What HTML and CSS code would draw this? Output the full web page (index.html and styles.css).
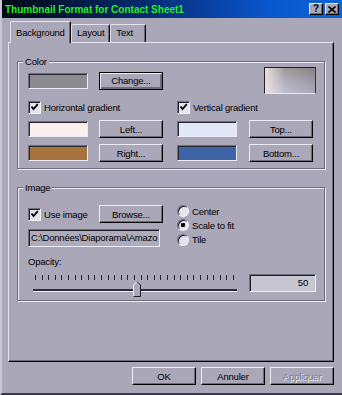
FILE: index.html
```html
<!doctype html>
<html lang="fr">
	<head>
		<meta charset="utf-8">
		<title>Thumbnail Format for Contact Sheet1</title>
		<link rel="stylesheet" href="styles.css">
	</head>
	<body>
		<div class="window">
			<div class="titlebar">
				<span class="title">Thumbnail Format for Contact Sheet1</span>
				<div class="title-btns">
					<span class="tbtn">?</span>
					<span class="tbtn">
						<svg width="8" height="7" viewBox="0 0 8 7"><path d="M0.5 0.5 L7.5 6.5 M7.5 0.5 L0.5 6.5" stroke="#000" stroke-width="1.6"/></svg>
					</span>
				</div>
			</div>

			<div class="tabs">
				<div class="tab active">Background</div>
				<div class="tab">Layout</div>
				<div class="tab">Text</div>
			</div>

			<div class="panel">
				<fieldset class="group color-group">
					<legend>Color</legend>
					<div class="grid color-grid">
						<div class="swatch sw-gray"></div>
						<button class="btn default">Change...</button>
						<div class="preview"></div>

						<label class="check span-2"><span class="box checked"></span>Horizontal gradient</label>
						<label class="check span-2"><span class="box checked"></span>Vertical gradient</label>

						<div class="swatch sw-pink"></div>
						<button class="btn">Left...</button>
						<div class="swatch sw-lightblue"></div>
						<button class="btn">Top...</button>

						<div class="swatch sw-brown"></div>
						<button class="btn">Right...</button>
						<div class="swatch sw-blue"></div>
						<button class="btn">Bottom...</button>
					</div>
				</fieldset>

				<fieldset class="group image-group">
					<legend>Image</legend>
					<div class="grid image-grid">
						<label class="check"><span class="box checked"></span>Use image</label>
						<button class="btn">Browse...</button>
						<div class="radios">
							<label class="radio"><span class="dot"></span>Center</label>
							<label class="radio"><span class="dot selected"></span>Scale to fit</label>
							<label class="radio"><span class="dot"></span>Tile</label>
						</div>

						<div class="path span-2">C:\Données\Diaporama\Amazo</div>

						<div class="caption span-3">Opacity:</div>

						<div class="slider">
							<div class="ticks"></div>
							<div class="track"></div>
							<svg class="thumb" width="8" height="16" viewBox="0 0 8 16">
								<path d="M0.5 15.5 V4 L4 0.5 L7.5 4 V15.5 Z" fill="#a9a7b8"/>
								<path d="M0.5 15.5 V4 L4 0.5" fill="none" stroke="#f0f0f8"/>
								<path d="M4 0.5 L7.5 4 V15.5 H0.5" fill="none" stroke="#202028"/>
							</svg>
						</div>
						<div class="value">50</div>
					</div>
				</fieldset>
			</div>

			<div class="footer">
				<button class="btn">OK</button>
				<button class="btn">Annuler</button>
				<button class="btn disabled">Appliquer</button>
			</div>
		</div>
	</body>
</html>
```

FILE: styles.css
```css
* {
	box-sizing: border-box;
}

body {
	margin: 0;
	background: #a9a7b8;
	font-family: "Liberation Sans", Arial, sans-serif;
	font-size: 9.5px;
	letter-spacing: -0.2px;
	color: #000;
}

.window {
	width: 342px;
	height: 395px;
	background: #a9a7b8;
	border-left: 2px solid #c8c7d6;
	border-bottom: 2px solid #3a3a48;
}

/* title bar */

.titlebar {
	height: 18px;
	display: flex;
	align-items: center;
	justify-content: space-between;
	padding: 0 3px 0 3px;
	background: linear-gradient(90deg, #000814 0%, #04296a 40%, #0a56cc 78%, #0c64d8 100%);
}

.title {
	color: #22ee22;
	font-weight: bold;
	font-size: 10px;
	letter-spacing: 0;
}

.title-btns {
	display: flex;
	gap: 2px;
}

.tbtn {
	width: 14px;
	height: 12px;
	display: flex;
	align-items: center;
	justify-content: center;
	background: #a9a7b8;
	border: 1px solid;
	border-color: #ececf4 #000 #000 #ececf4;
	box-shadow: inset -1px -1px #6c6c7c;
	font-weight: bold;
	font-size: 10px;
	line-height: 10px;
	letter-spacing: 0;
}

/* tabs */

.tabs {
	display: flex;
	align-items: flex-end;
	height: 21px;
	margin-top: 3px;
	padding-left: 8px;
}

.tab {
	height: 18px;
	min-width: 36px;
	padding: 0 5px;
	line-height: 15px;
	border: 1px solid;
	border-bottom: none;
	border-color: #e4e4ee #000 transparent #e4e4ee;
	box-shadow: inset -1px 0 #6c6c7c;
	border-radius: 2px 2px 0 0;
}

.tab.active {
	width: 61px;
	height: 22px;
	margin-bottom: -1px;
	padding-top: 3px;
	position: relative;
	z-index: 1;
	background: #a9a7b8;
}

/* panel */

.panel {
	margin-left: 6px;
	width: 326px;
	height: 320px;
	padding: 13px 8px 0 8px;
	border: 1px solid;
	border-color: #e4e4ee #000 #000 #e4e4ee;
	box-shadow: inset -1px -1px #6c6c7c;
}

.group {
	margin: 0;
	min-width: 0;
	padding: 0 0 6px 10px;
	border: 1px solid #6c6c7c;
	box-shadow: inset 1px 1px #ececf4, 1px 1px #ececf4;
}

.group legend {
	margin-left: -5px;
	padding: 0 2px;
	line-height: 11px;
	background: #a9a7b8;
}

.image-group {
	margin-top: 13px;
	padding-top: 12px;
	padding-bottom: 2px;
}

.grid {
	display: grid;
	grid-template-columns: 71px 78px 72px 64px;
}

.color-grid {
	grid-template-rows: 27px 14px 18px 18px;
	row-gap: 6px;
	align-items: center;
}

.image-grid {
	grid-template-rows: 18px 18px 14px 25px;
	row-gap: 6px;
}

.span-2 {
	grid-column: span 2;
}

.span-3 {
	grid-column: span 3;
}

/* buttons */

.btn {
	width: 64px;
	height: 18px;
	padding: 0;
	font: inherit;
	letter-spacing: inherit;
	color: #000;
	background: #a9a7b8;
	border: 1px solid;
	border-color: #ececf4 #000 #000 #ececf4;
	box-shadow: inset -1px -1px #6c6c7c;
}

.btn.default {
	border-color: #000;
	box-shadow: inset 1px 1px #ececf4, inset -2px -2px #6c6c7c;
}

.btn.disabled {
	color: #7c7c8c;
	text-shadow: 1px 1px #ececf4;
}

/* colour wells */

.swatch {
	width: 60px;
	height: 16px;
	border: 1px solid;
	border-color: #6c6c7c #ececf4 #ececf4 #6c6c7c;
	box-shadow: inset 1px 1px #2a2a34;
}

.sw-gray { background: #8c8c90; }
.sw-pink { background: #fcf0ee; }
.sw-brown { background: #a6743a; }
.sw-lightblue { background: #e2e8f8; }
.sw-blue { background: #3e64a6; }

.preview {
	grid-column: 4;
	justify-self: end;
	width: 52px;
	height: 27px;
	margin-right: -3px;
	border: 1px solid;
	border-color: #202028 #303038 #e8e8f0 #202028;
	background:
		linear-gradient(90deg, rgba(238, 230, 228, 0.95), rgba(236, 226, 224, 0.2) 40%, rgba(120, 112, 110, 0.2)),
		linear-gradient(180deg, #8a8686, #a6a4b6 60%, #b6b4ca);
}

/* checkboxes and radios */

.check,
.radio {
	display: flex;
	align-items: center;
	gap: 3px;
	white-space: nowrap;
}

.box {
	width: 13px;
	height: 13px;
	flex: none;
	border: 1px solid;
	border-color: #6c6c7c #f4f4f8 #f4f4f8 #6c6c7c;
	box-shadow: inset 1px 1px #202028;
	background: #e4e4ec;
}

.box.checked {
	background: #e4e4ec url("data:image/svg+xml,%3Csvg xmlns='http://www.w3.org/2000/svg' width='11' height='11'%3E%3Cpath d='M2.5 4.5 L4.5 7 L8.8 2.2' fill='none' stroke='%23000' stroke-width='1.8'/%3E%3C/svg%3E") no-repeat 0 0;
}

.radios {
	grid-column: 3 / 5;
	grid-row: 1 / 3;
	display: flex;
	flex-direction: column;
	margin-top: -1px;
}

.radio {
	height: 17px;
}

.dot {
	width: 12px;
	height: 12px;
	flex: none;
	border-radius: 50%;
	border: 1px solid;
	border-color: #6c6c7c #f4f4f8 #f4f4f8 #6c6c7c;
	box-shadow: inset 1px 1px #202028;
	background: #e4e4ec;
}

.dot.selected {
	background: radial-gradient(circle, #000 0 2px, #e4e4ec 2.5px);
}

/* image row */

.path {
	width: 132px;
	height: 18px;
	padding-left: 2px;
	line-height: 16px;
	white-space: nowrap;
	overflow: hidden;
	background: #aeacbc;
	border: 1px solid;
	border-color: #6c6c7c #ececf4 #ececf4 #6c6c7c;
	box-shadow: inset 1px 1px #202028;
}

.caption {
	align-self: end;
	line-height: 11px;
}

.slider {
	grid-column: 1 / 4;
	width: 204px;
	margin-left: 5px;
	position: relative;
}

.ticks {
	height: 5px;
	margin: 2px 0 0 2px;
	width: 200px;
	background: repeating-linear-gradient(90deg, #24242e 0 1px, transparent 1px 6.6px);
}

.track {
	height: 3px;
	margin-top: 9px;
	border-top: 2px solid #2c2c38;
	border-bottom: 1px solid #f0f0f8;
}

.thumb {
	position: absolute;
	left: 100px;
	top: 8px;
}

.value {
	width: 67px;
	height: 18px;
	margin-top: 1px;
	padding-right: 7px;
	text-align: right;
	line-height: 16px;
	background: #c6c5d0;
	border: 1px solid;
	border-color: #6c6c7c #ececf4 #ececf4 #6c6c7c;
	box-shadow: inset 1px 1px #202028;
}

/* bottom buttons */

.footer {
	margin: 5px 0 0 6px;
	width: 326px;
	display: flex;
	justify-content: flex-end;
	gap: 5px;
}
```
